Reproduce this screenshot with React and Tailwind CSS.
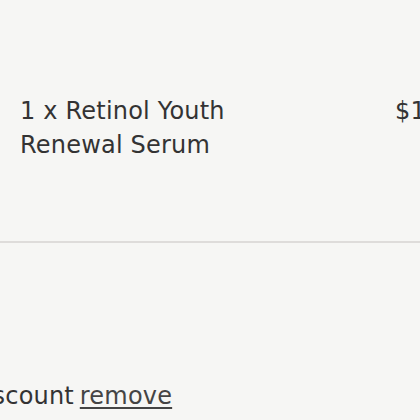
export default function App() {
  return (
    <div className="w-[420px] h-[420px] overflow-hidden bg-[#f6f6f4] text-[#333333] font-['DejaVu_Sans',sans-serif]">
      <div className="flex w-[520px] pl-5 pt-[94px] h-[241px]">
        <div className="w-[375px] text-[24px] leading-[34px] tracking-[0.2px]">
          1 x Retinol Youth<br />Renewal Serum
        </div>
        <div className="text-[24px] leading-[34px] tracking-[0.2px]">$18.00</div>
      </div>
      <div className="h-[2px] bg-[#dedcda]"></div>
      <div className="pt-[136px] ml-[-33px] text-[24px] leading-[34px] tracking-[0.2px] whitespace-nowrap">
        Discount <span className="ml-[-2px] underline underline-offset-[3px] text-[#444]">remove</span>
      </div>
    </div>
  );
}
